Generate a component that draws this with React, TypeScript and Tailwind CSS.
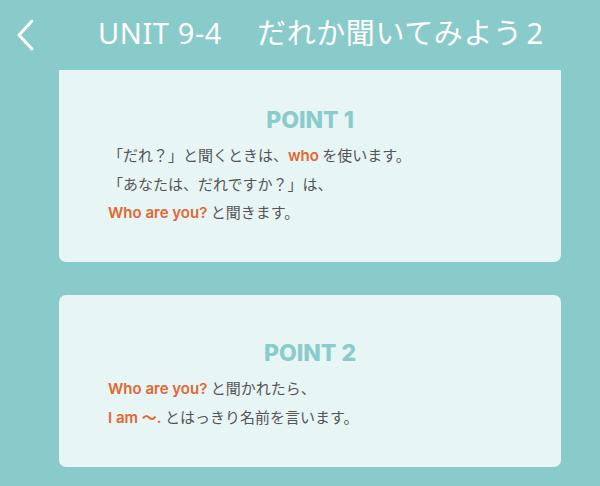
const jp = { fontFamily: '"Noto Sans CJK JP", "Noto Sans", sans-serif' };
const en = { fontFamily: 'Inter, "Noto Sans CJK JP", sans-serif' };

function Hl({ children }: { children: React.ReactNode }) {
  return (
    <span className="font-semibold text-[#e4662f]" style={en}>
      {children}
    </span>
  );
}

function PointCard({
  title,
  lines,
  className,
}: {
  title: string;
  lines: React.ReactNode[];
  className: string;
}) {
  return (
    <div className={`bg-[#e8f5f5] ${className}`}>
      <h2
        className="text-center text-[23px] font-extrabold leading-[30px] tracking-[0px] text-[#8accca]"
        style={en}
      >
        {title}
      </h2>
      <div className="mt-[6px] pl-[49px] text-[15px] leading-[28px] text-[#555555]" style={jp}>
        {lines.map((l, i) => (
          <p key={i}>{l}</p>
        ))}
      </div>
    </div>
  );
}

export default function App() {
  return (
    <div className="w-[600px] h-[486px] overflow-hidden bg-[#88cbca]">
      <header className="h-[70px] flex items-center text-white" style={jp}>
        <button className="w-[50px] h-[64px] flex items-center justify-center">
          <svg width="22" height="34" viewBox="0 0 22 34" fill="none">
            <path d="M18 3 L5 17 L18 31" stroke="white" strokeWidth="3" strokeLinecap="round" strokeLinejoin="round" />
          </svg>
        </button>
        <h1 className="ml-[48px] text-[29px] font-normal leading-none pb-[6px] tracking-[0.6px]">
          <span style={{ fontFamily: '"Noto Sans", sans-serif' }}>UNIT 9-4</span>
          <span className="ml-[35px]">だれか聞いてみよう</span>
          <span className="ml-[4px]" style={{ fontFamily: '"Noto Sans", sans-serif' }}>2</span>
        </h1>
      </header>
      <div className="pl-[59px] pr-[39px]">
        <PointCard
          title="POINT 1"
          className="h-[192px] rounded-b-[7px] pt-[35px]"
          lines={[
            <>「だれ？」と聞くときは、<Hl>who</Hl> を使います。</>,
            <>「あなたは、だれですか？」は、</>,
            <><Hl>Who are you?</Hl> と聞きます。</>,
          ]}
        />
        <PointCard
          title="POINT 2"
          className="mt-[33px] h-[172px] rounded-[7px] pt-[43px]"
          lines={[
            <><Hl>Who are you?</Hl> と聞かれたら、</>,
            <><Hl>I am ～.</Hl> とはっきり名前を言います。</>,
          ]}
        />
      </div>
    </div>
  );
}
